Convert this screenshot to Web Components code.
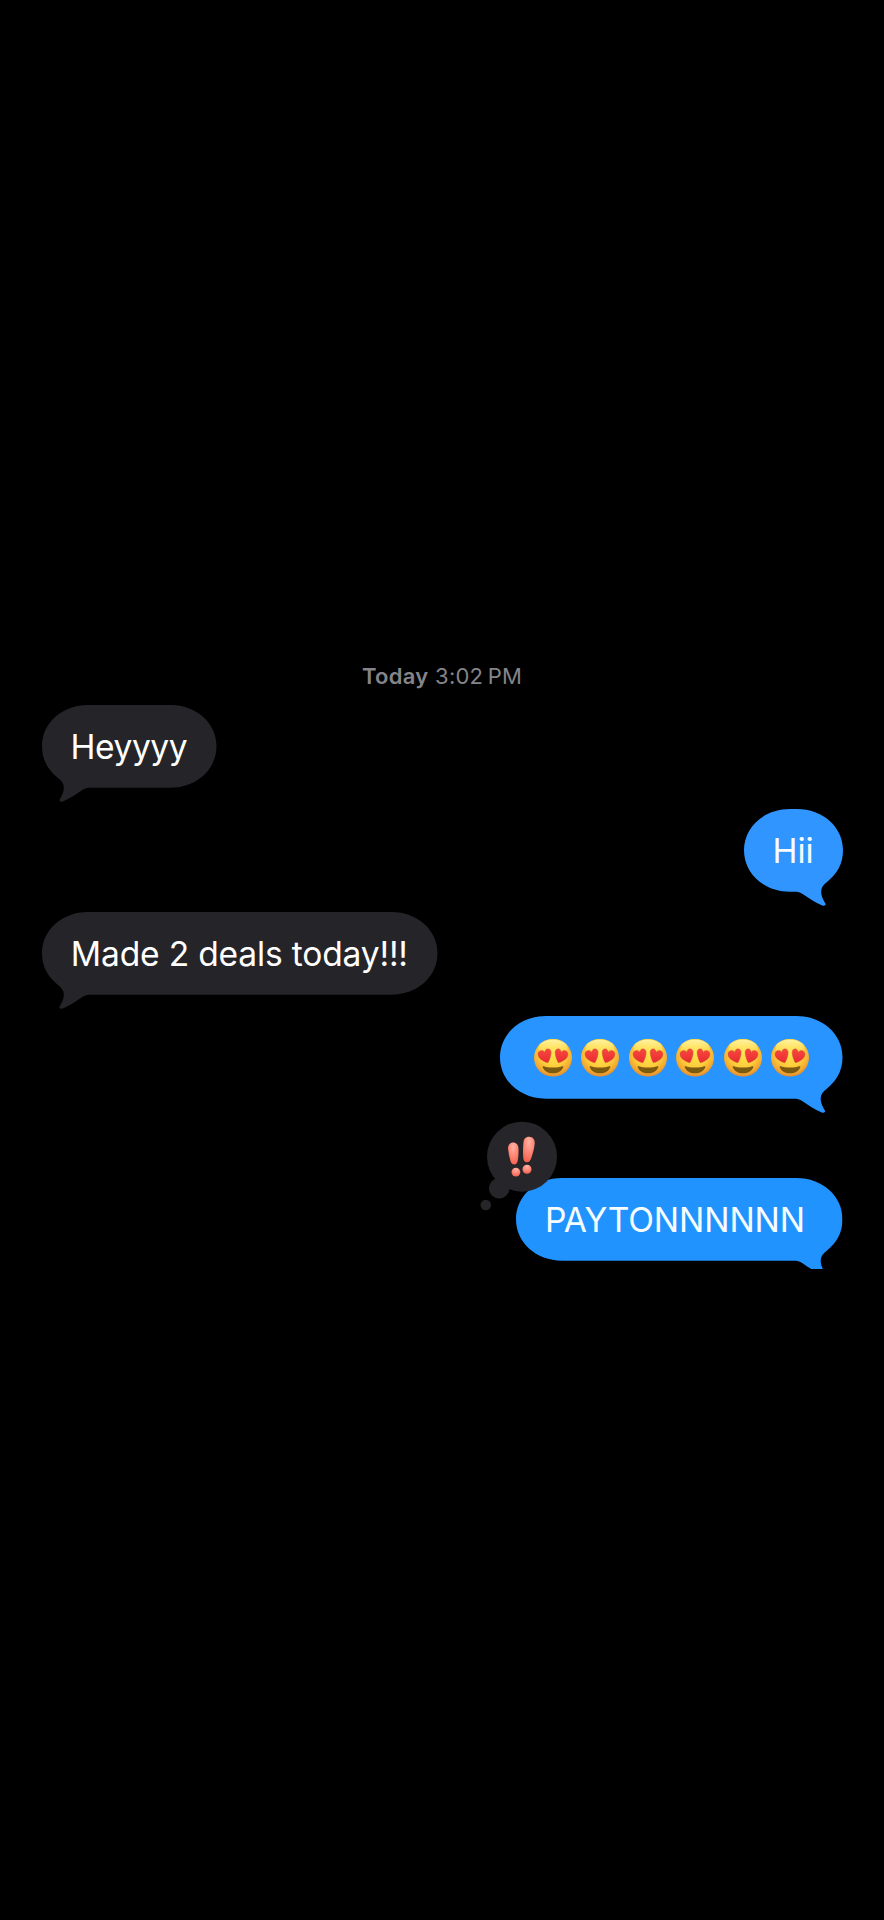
<!DOCTYPE html>
<html lang="en">
<head>
<meta charset="utf-8">
<title>Messages</title>
<style>
html,body{margin:0;background:#000}
body{width:884px;height:1920px;overflow:hidden;font-family:Inter,"Liberation Sans",sans-serif}
</style>
</head>
<body>
<chat-thread>
  <chat-stamp><b slot="day">Today</b>3:02&#8202;&#8202;PM</chat-stamp>
  <chat-bubble w="174.5" fit="116.5">Heyyyy</chat-bubble>
  <chat-bubble sent w="99" fit="41" fill="#3095ff">Hii</chat-bubble>
  <chat-bubble w="395.5" fit="337">Made 2 deals today!!!</chat-bubble>
  <chat-bubble sent w="342.5" fill="#2894ff"><heart-eyes count="6"></heart-eyes></chat-bubble>
  <chat-bubble sent cut w="326.5" fit="260" shift="-4.3" fill="#2093ff">PAYTONNNNNN<tap-back slot="reaction"></tap-back></chat-bubble>
</chat-thread>
<script>
class ChatThread extends HTMLElement{
  constructor(){
    super();
    this.attachShadow({mode:'open'}).innerHTML=`<style>
      :host{display:flex;flex-direction:column;box-sizing:border-box;width:884px;height:1920px;padding:661.2px 41.5px 0 41.6px;background:#000;gap:20.9px}
      ::slotted(chat-stamp){margin-bottom:-6.9px}
      ::slotted(chat-bubble[cut]){margin-top:58.4px}
    </style><slot></slot>`;
  }
}
class ChatStamp extends HTMLElement{
  constructor(){
    super();
    this.attachShadow({mode:'open'}).innerHTML=`<style>
      :host{display:flex;justify-content:center;align-items:center;gap:6.8px;height:30px;font-size:22px;line-height:30px;color:#858589;letter-spacing:.22px;white-space:nowrap}
      ::slotted(b){font-weight:600}
    </style><slot name="day"></slot><span><slot></slot></span>`;
  }
}
class ChatBubble extends HTMLElement{
  constructor(){super();this.attachShadow({mode:'open'})}
  connectedCallback(){
    const w=+this.getAttribute('w'),sent=this.hasAttribute('sent');
    const fill=this.getAttribute('fill')||'#252429';
    const shift=+this.getAttribute('shift')||0;
    const k=46,r=w-k;
    const d=`M0 41.3C0 18 20 0 ${k} 0H${r}C${w-20} 0 ${w} 18 ${w} 41.3S${w-20} 82.7 ${r} 82.7H49C45 82.7 43 83.2 40 85.2C34 89.2 28 93.600 20.800 96.400C18.500 97.300 16.800 96.200 17.600 94.400C19 92 21.800 88 21.800 82.500C21.800 78.500 19.500 75.800 16 73C6 65 0 55 0 41.3Z`;
    this.shadowRoot.innerHTML=`<style>
      :host{display:grid;position:relative;width:${w}px;height:82.7px;align-self:${sent?'flex-end':'flex-start'};color:${sent?'#f6fdff':'#fff'};font-size:33.6px;line-height:82.7px}
      .shape,.content{grid-area:1/1}
      .shape{display:block;overflow:visible;${sent?'transform:scaleX(-1);':''}}
      :host([cut]) .shape{clip-path:inset(0 0 -8.3px 0)}
      .content{display:flex;justify-content:center;align-items:center;position:relative;height:82.7px}
      .text{white-space:pre;transform:translate(${shift}px,1.2px)}
    </style>
    <svg class="shape" width="${w}" height="82.7"><path d="${d}" fill="${fill}"/></svg>
    <div class="content"><div class="text"><slot></slot></div></div><slot name="reaction"></slot>`;
    if(this.hasAttribute('fit')){
      const text=this.shadowRoot.querySelector('.text');
      const n=this.textContent.trim().length;
      text.style.letterSpacing=(+this.getAttribute('fit')-text.getBoundingClientRect().width)/n+'px';
    }
  }
}
class HeartEyes extends HTMLElement{
  constructor(){super();this.attachShadow({mode:'open'})}
  connectedCallback(){
    const face=`<svg class="face" width="38" height="38" viewBox="0 0 38 38">
      <defs>
        <radialGradient id="skin" cx=".5" cy=".38" r=".64"><stop offset="0" stop-color="#ffe450"/><stop offset=".55" stop-color="#fdce3c"/><stop offset=".82" stop-color="#f4a830"/><stop offset="1" stop-color="#d98430"/></radialGradient>
        <linearGradient id="shine" x1="0" y1="0" x2="0" y2="1"><stop offset="0" stop-color="#fff7ab" stop-opacity=".95"/><stop offset="1" stop-color="#ffe75a" stop-opacity="0"/></linearGradient>
        <linearGradient id="heart" x1="0" y1="0" x2="0" y2="1"><stop offset="0" stop-color="#f8493e"/><stop offset="1" stop-color="#e92a33"/></linearGradient>
      </defs>
      <circle cx="19" cy="19" r="19" fill="url(#skin)"/>
      <ellipse cx="19" cy="9.5" rx="14.5" ry="8.7" fill="url(#shine)"/>
      <path d="M9.8 27.6C11.2 28.3 15 28.9 19 28.9S26.8 28.3 28.2 27.6C29.1 27.3 29.6 27.9 29.2 28.7C27.6 32.500 24 34.500 19 34.500S10.400 32.500 8.800 28.700C8.400 27.900 8.900 27.300 9.800 27.600Z" fill="#7c5a0f"/>
      <g fill="url(#heart)" stroke="#c8602a" stroke-width=".4">
        <path d="M13.9 24C10.500 23.200 5.400 20.600 4.300 17.200C3.300 14.200 5 12 7.200 11.800C8.800 11.700 10 12.400 10.800 13.500C11 11.500 12.200 10.100 14 10.100C16.400 10.100 17.500 12.300 17.100 15C16.700 18.400 15.200 21.800 13.900 24Z"/>
        <path d="M24.300 24C27.700 23.200 32.600 20.600 33.700 17.200C34.700 14.200 33 12 30.800 11.800C29.200 11.700 28 12.400 27.200 13.500C27 11.500 25.800 10.100 24 10.100C21.800 10.100 20.800 12.300 21.200 15C21.600 18.400 23 21.800 24.300 24Z"/>
      </g>
    </svg>`;
    this.shadowRoot.innerHTML=`<style>:host{display:flex;gap:9.5px;width:max-content;height:38px;transform:translateY(-.5px)}.face{display:block;flex:none}</style>`+face.repeat(+this.getAttribute('count')||1);
  }
}
class TapBack extends HTMLElement{
  constructor(){
    super();
    this.attachShadow({mode:'open'}).innerHTML=`<style>:host{display:block;position:absolute;left:-36px;top:-57px;width:78px;height:92px}svg{display:block}</style>
    <svg width="78" height="92" viewBox="480 1121 78 92">
      <defs>
        <radialGradient id="g" cx=".5" cy=".2" r=".8"><stop offset="0" stop-color="#ffb3a7"/><stop offset=".5" stop-color="#ff8a79"/><stop offset="1" stop-color="#f6614f"/></radialGradient>
      </defs>
      <g fill="#262529"><circle cx="522" cy="1156.7" r="35"/><circle cx="499.2" cy="1188.3" r="10.3"/><circle cx="485.8" cy="1205" r="5.3"/></g>
      <g fill="url(#g)">
        <path d="M508.1 1149C507.8 1145 510 1142.400 513 1142.400C516.300 1142.400 518.300 1144.600 518.500 1148.500C518.700 1153 518.300 1157.500 517.800 1160.500C517.300 1163 516.200 1164.600 514.300 1164.600C512.300 1164.600 511 1163 510.300 1160.500C509.400 1157 508.500 1153 508.100 1149Z"/>
        <path d="M523.4 1143C523.7 1139 525.500 1136.800 529 1136.800C532.800 1136.800 535 1139.600 534.700 1143.500C534.300 1148.500 532.800 1153.500 531.300 1158C530.400 1160.800 529 1162.300 527 1162.300C524.600 1162.300 523.400 1160.600 523.200 1157.600C522.900 1153 523 1147.500 523.400 1143Z"/>
        <circle cx="515.9" cy="1172.1" r="4.4"/><circle cx="527" cy="1169.3" r="4.5"/>
      </g>
    </svg>`;
  }
}
customElements.define('chat-thread',ChatThread);
customElements.define('chat-stamp',ChatStamp);
customElements.define('heart-eyes',HeartEyes);
customElements.define('tap-back',TapBack);
customElements.define('chat-bubble',ChatBubble);
</script>
</body>
</html>
